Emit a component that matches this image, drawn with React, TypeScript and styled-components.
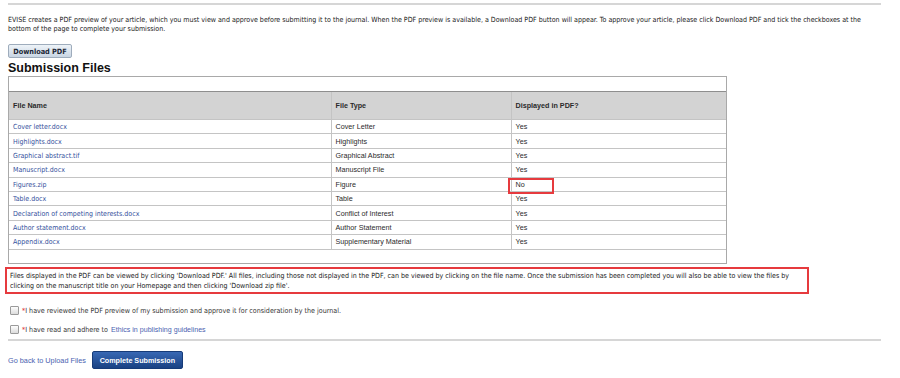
import React from 'react'
import styled, { createGlobalStyle } from 'styled-components'

const GlobalStyle = createGlobalStyle`
  html, body {
    margin: 0;
    padding: 0;
    background: #fff;
  }
  body {
    font-family: Tahoma, 'DejaVu Sans Condensed', 'DejaVu Sans', sans-serif;
    color: #222;
  }
`

const Page = styled.div`
  width: 873px;
  padding: 3px 0 0 8px;
`

const Rule = styled.div<{ $top?: number }>`
  height: 2px;
  background: #d6d6d6;
  margin-top: ${({ $top }) => $top ?? 0}px;
`

const Intro = styled.p`
  margin: 10px 0 0;
  font-size: 7.05px;
  line-height: 9px;
  color: #222;
`

const PaleButton = styled.button`
  display: block;
  margin-top: 11px;
  width: 64px;
  height: 14px;
  padding: 0;
  border: 1px solid #9eacbc;
  border-radius: 2px;
  background: linear-gradient(#eef3f8, #c9d5e3);
  font-family: Tahoma, 'DejaVu Sans Condensed', 'DejaVu Sans', sans-serif;
  font-size: 7.3px;
  font-weight: bold;
  color: #1c2736;
`

const Heading = styled.h2`
  margin: 3px 0 0;
  font-family: 'Liberation Sans', Arial, sans-serif;
  font-size: 12.5px;
  line-height: 15px;
  font-weight: bold;
  color: #111;
`

const FilesBox = styled.div`
  margin-top: 0;
  width: 719px;
  height: 188px;
  box-sizing: border-box;
  border: 1px solid #a9a9a9;
  padding-top: 14px;
`

const Table = styled.table`
  width: 100%;
  table-layout: fixed;
  border-collapse: collapse;
  font-family: 'Liberation Sans', Arial, sans-serif;
  font-size: 7.2px;
  color: #2a2a2a;
`

const HeadCell = styled.th<{ $w?: number }>`
  box-sizing: border-box;
  background: #d3d3d3;
  height: 28px;
  padding: 0 4px;
  text-align: left;
  font-weight: bold;
  border-top: 1px solid #8e8e8e;
  border-bottom: 1px solid #c4c4c4;
  border-left: 1px solid #c4c4c4;
  width: ${({ $w }) => ($w ? `${$w}px` : 'auto')};
  &:first-child { border-left: none; }
`

const Cell = styled.td`
  position: relative;
  height: 13.4px;
  padding: 0 4px;
  white-space: nowrap;
  border-bottom: 1px solid #c4c4c4;
  border-left: 1px solid #c4c4c4;
  &:first-child { border-left: none; }
`

const FileLink = styled.a`
  font-family: Tahoma, 'DejaVu Sans Condensed', 'DejaVu Sans', sans-serif;
  font-size: 7px;
  color: #34509c;
  text-decoration: none;
`

const Marker = styled.span`
  position: absolute;
  left: -4px;
  top: 0;
  width: 42px;
  height: 12px;
  border: 2px solid #e63a3e;
`

const Note = styled.p`
  margin: 3px 0 0 -3px;
  width: 794px;
  padding: 2px 3px 2px 3px;
  border: 2px solid #e63a3e;
  font-size: 7.05px;
  line-height: 9.5px;
  color: #222;
`

const CheckRow = styled.label<{ $top: number }>`
  display: flex;
  align-items: center;
  margin-top: ${({ $top }) => $top}px;
  padding-left: 2px;
  font-size: 7.1px;
  color: #333;
`

const Box = styled.span`
  width: 7px;
  height: 7px;
  margin-right: 3px;
  border: 1px solid #9a9a9a;
  border-radius: 1px;
  background: linear-gradient(#fdfdfd, #dcdcdc);
`

const Star = styled.span`
  color: #e0302f;
`

const InlineLink = styled.a`
  margin-left: 3px;
  font-family: 'Liberation Sans', Arial, sans-serif;
  color: #4a5fb0;
  text-decoration: none;
`

const Footer = styled.div`
  display: flex;
  align-items: center;
  gap: 6px;
  margin-top: 10px;
`

const BackLink = styled.a`
  font-family: 'Liberation Sans', Arial, sans-serif;
  font-size: 7.3px;
  color: #4a5fb0;
  text-decoration: none;
`

const PrimaryButton = styled.button`
  width: 91px;
  height: 18px;
  padding: 0;
  border: 1px solid #163b78;
  border-radius: 2px;
  background: linear-gradient(#3868b4, #1a4283);
  font-family: 'Liberation Sans', Arial, sans-serif;
  font-size: 7.2px;
  font-weight: bold;
  color: #fff;
`

const files = [
  { name: 'Cover letter.docx', type: 'Cover Letter', shown: 'Yes' },
  { name: 'Highlights.docx', type: 'Highlights', shown: 'Yes' },
  { name: 'Graphical abstract.tif', type: 'Graphical Abstract', shown: 'Yes' },
  { name: 'Manuscript.docx', type: 'Manuscript File', shown: 'Yes' },
  { name: 'Figures.zip', type: 'Figure', shown: 'No', flagged: true },
  { name: 'Table.docx', type: 'Table', shown: 'Yes' },
  { name: 'Declaration of competing interests.docx', type: 'Conflict of Interest', shown: 'Yes' },
  { name: 'Author statement.docx', type: 'Author Statement', shown: 'Yes' },
  { name: 'Appendix.docx', type: 'Supplementary Material', shown: 'Yes' },
]

export default function App() {
  return (
    <Page>
      <GlobalStyle />
      <Rule />
      <Intro>
        EVISE creates a PDF preview of your article, which you must view and approve before submitting it to the
        journal. When the PDF preview is available, a Download PDF button will appear. To approve your article, please
        click Download PDF and tick the checkboxes at the bottom of the page to complete your submission.
      </Intro>
      <PaleButton>Download PDF</PaleButton>
      <Heading>Submission Files</Heading>
      <FilesBox>
        <Table>
          <thead>
            <tr>
              <HeadCell $w={322}>File Name</HeadCell>
              <HeadCell $w={180}>File Type</HeadCell>
              <HeadCell>Displayed in PDF?</HeadCell>
            </tr>
          </thead>
          <tbody>
            {files.map((f) => (
              <tr key={f.name}>
                <Cell>
                  <FileLink href="#">{f.name}</FileLink>
                </Cell>
                <Cell>{f.type}</Cell>
                <Cell>
                  {f.flagged && <Marker />}
                  {f.shown}
                </Cell>
              </tr>
            ))}
          </tbody>
        </Table>
      </FilesBox>
      <Note>
        Files displayed in the PDF can be viewed by clicking 'Download PDF.' All files, including those not displayed
        in the PDF, can be viewed by clicking on the file name. Once the submission has been completed you will also be
        able to view the files by clicking on the manuscript title on your Homepage and then clicking 'Download zip
        file'.
      </Note>
      <CheckRow $top={12}>
        <Box />
        <Star>*</Star>I have reviewed the PDF preview of my submission and approve it for consideration by the journal.
      </CheckRow>
      <CheckRow $top={10}>
        <Box />
        <Star>*</Star>I have read and adhere to
        <InlineLink href="#">Ethics in publishing guidelines</InlineLink>
      </CheckRow>
      <Rule $top={5} />
      <Footer>
        <BackLink href="#">Go back to Upload Files</BackLink>
        <PrimaryButton>Complete Submission</PrimaryButton>
      </Footer>
    </Page>
  )
}
